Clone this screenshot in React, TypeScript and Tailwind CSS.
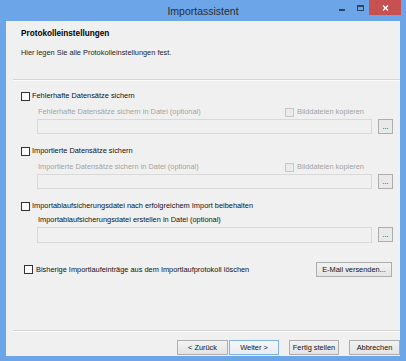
import React from 'react';

const font = "font-['Liberation_Sans',Arial,sans-serif]";

function Check({ disabled }: { disabled?: boolean }) {
  return (
    <span
      className={`block w-[9px] h-[9px] shrink-0 border ${
        disabled ? 'border-[#c6c6c6] bg-[#ebebeb]' : 'border-[#333333] bg-white'
      }`}
    />
  );
}

function FileGroup({
  label,
  sub,
  subEnabled,
  withImages,
  subGap,
  boxH,
  top,
}: {
  label: string;
  sub: string;
  subEnabled?: boolean;
  withImages?: boolean;
  subGap: string;
  boxH: string;
  top: string;
}) {
  return (
    <div className={`flex flex-col ${top}`}>
      <div className="flex items-center h-[10px] gap-[2px]">
        <Check />
        <span className="text-[#111]">{label}</span>
      </div>
      <div className={`flex items-center h-[10px] pl-[17px] ${subGap}`}>
        <span className={`flex-1 ${subEnabled ? 'text-[#111]' : 'text-[#a3a3a3]'}`}>{sub}</span>
        {withImages && (
          <div className="w-[115px] flex items-center gap-[3px]">
            <Check disabled />
            <span className="text-[#a3a3a3]">Bilddateien kopieren</span>
          </div>
        )}
      </div>
      <div className="flex items-start mt-[2px] pl-[16px] pr-[7px] gap-[6px]">
        <div className={`flex-1 ${boxH} border border-[#d9d9d9] bg-[#f0f0f0]`} />
        <button className="w-[15px] h-[15px] border border-[#adadad] bg-[#e9e9e9] text-[#222] flex items-end justify-center leading-[10px] pb-[1px]">
          ...
        </button>
      </div>
    </div>
  );
}

function WinButton({ label, primary, w, ml }: { label: string; primary?: boolean; w: string; ml: string }) {
  return (
    <button
      className={`${w} ${ml} h-[15px] border flex items-center justify-center text-[#111] bg-gradient-to-b ${
        primary
          ? 'border-[#7fb3e8] from-[#f4f7fb] to-[#e8edf3]'
          : 'border-[#adadad] from-[#f2f2f2] to-[#e4e4e4]'
      }`}
    >
      {label}
    </button>
  );
}

export default function App() {
  return (
    <div className={`w-[406px] h-[361px] bg-[#6ca6e9] flex flex-col ${font}`}>
      <div className="relative h-[21px] shrink-0 flex items-center justify-center">
        <span className="text-[10.5px] text-[#2b2b2b] leading-none mt-[1px]">Importassistent</span>
        <span className="absolute top-[9px] right-[61px] w-[6px] h-[2px] bg-[#2c4660]" />
        <span className="absolute top-[5px] right-[42px] w-[7px] h-[6px] border border-t-2 border-[#2c4660]" />
        <div className="absolute top-0 right-[5px] w-[32px] h-[15px] bg-[#c75050] flex items-center justify-center">
          <svg width="7" height="6" viewBox="0 0 7 6">
            <path d="M1 0.5 L6 5.5 M6 0.5 L1 5.5" stroke="#fff" strokeWidth="1.4" />
          </svg>
        </div>
      </div>

      <div className="mx-[6px] h-[335px] bg-[#f0f0f0] flex flex-col text-[7.4px] leading-[10px]">
        <div className="pl-[15px] pt-[8px] flex flex-col">
          <div className="h-[10px] flex items-center font-bold text-[8.2px] text-black">Protokolleinstellungen</div>
          <div className="h-[10px] flex items-center mt-[9px] text-[#1e1e1e]">
            Hier legen Sie alle Protokolleinstellungen fest.
          </div>
        </div>
        <div className="ml-[7px] mt-[21px] h-[2px] border-t border-t-[#d5d5d5] border-b border-b-[#fcfcfc]" />

        <div className="pl-[15px] flex flex-col">
          <FileGroup
            top="mt-[10px]"
            label="Fehlerhafte Datensätze sichern"
            sub="Fehlerhafte Datensätze sichern in Datei (optional)"
            withImages
            subGap="mt-[6px]"
            boxH="h-[15px]"
          />
          <FileGroup
            top="mt-[12px]"
            label="Importierte Datensätze sichern"
            sub="Importierte Datensätze sichern in Datei (optional)"
            withImages
            subGap="mt-[6px]"
            boxH="h-[15px]"
          />
          <FileGroup
            top="mt-[12px]"
            label="Importablaufsicherungsdatei nach erfolgreichem Import beibehalten"
            sub="Importablaufsicherungsdatei erstellen in Datei (optional)"
            subEnabled
            subGap="mt-[4px]"
            boxH="h-[16px]"
          />
          <div className="mt-[19px] h-[15px] flex items-center pl-[3px] pr-[8px]">
            <Check />
            <span className="ml-[3px] flex-1 text-[#111]">Bisherige Importlaufeinträge aus dem Importlaufprotokoll löschen</span>
            <WinButton label="E-Mail versenden..." w="w-[76px]" ml="ml-0" />
          </div>
        </div>

        <div className="flex-1" />
        <div className="ml-[7px] h-[2px] border-t border-t-[#d5d5d5] border-b border-b-[#fcfcfc]" />
        <div className="mt-[8px] mb-[1px] flex justify-end">
          <WinButton label="< Zurück" w="w-[51px]" ml="ml-0" />
          <WinButton label="Weiter >" primary w="w-[50px]" ml="ml-[1px]" />
          <WinButton label="Fertig stellen" w="w-[50px]" ml="ml-[10px]" />
          <WinButton label="Abbrechen" w="w-[51px]" ml="ml-[10px]" />
        </div>
      </div>
    </div>
  );
}
